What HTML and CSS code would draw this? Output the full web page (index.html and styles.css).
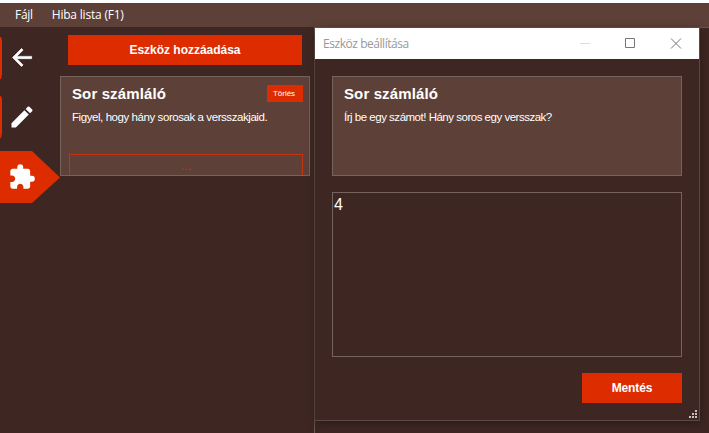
FILE: index.html
```
<!DOCTYPE html>
<html lang="hu">
<head>
<meta charset="utf-8">
<title>Eszköz beállítása</title>
<link rel="stylesheet" href="styles.css">
</head>
<body>
<nav class="menu"><span class="file">Fájl</span><span class="errors">Hiba lista (F1)</span></nav>
<main class="app">
  <aside class="sidebar">
    <div class="tab first">
      <svg class="edge" viewBox="0 0 3 42"><path d="M0 0H1L2 3V37L1 42H0Z"/></svg>
      <svg class="icon arrow" viewBox="0 0 24 24"><path d="M21 11v2H7.800l5.600 5.600L12 20l-8-8 8-8 1.400 1.400L7.800 11Z" stroke="#fff" stroke-width=".6"/></svg>
    </div>
    <div class="tab second">
      <svg class="edge" viewBox="0 0 3 42"><path d="M0 0H1L2 3V37L1 42H0Z"/></svg>
      <svg class="icon pencil" viewBox="0 0 24 24"><path d="M3 17.25V21h3.75L17.81 9.94l-3.75-3.75L3 17.25zM20.71 7.04a1 1 0 0 0 0-1.41l-2.34-2.34a1 1 0 0 0-1.41 0l-1.83 1.83 3.75 3.75 1.83-1.83z"/></svg>
    </div>
    <div class="tab active">
      <svg class="icon puzzle" viewBox="0 0 24 24"><path d="M20.5 11H19V7c0-1.1-.9-2-2-2h-4V3.5a2.5 2.5 0 0 0-5 0V5H4c-1.1 0-1.99.9-1.99 2v3.8H3.5c1.49 0 2.7 1.21 2.7 2.7s-1.21 2.7-2.7 2.7H2V20c0 1.1.9 2 2 2h3.8v-1.5c0-1.49 1.21-2.7 2.7-2.7 1.49 0 2.7 1.21 2.7 2.7V22H17c1.1 0 2-.9 2-2v-4h1.5a2.5 2.5 0 0 0 0-5z"/></svg>
    </div>
  </aside>
  <section class="tools">
    <button class="button add"><span>Eszköz hozzáadása</span></button>
    <article class="card tool">
      <header><h2>Sor számláló</h2><button class="button delete"><span>Törlés</span></button></header>
      <p class="watch">Figyel, hogy hány sorosak a versszakjaid.</p>
      <button class="more">...</button>
    </article>
  </section>
  <section class="workspace">
    <div class="dialog">
      <header class="titlebar">
        <span class="title">Eszköz beállítása</span>
        <svg class="controls" viewBox="0 0 120 30" fill="none"><path d="M10 15.500h10" stroke="#ddd"/><path d="M55.500 10.500h9v9h-9z" stroke="#777"/><path d="M101 10.500l10 10M111 10.500l-10 10" stroke="#777"/></svg>
      </header>
      <div class="content">
        <article class="card prompt"><h2>Sor számláló</h2><p class="question">Írj be egy számot! Hány soros egy versszak?</p></article>
        <div class="value">4</div>
        <button class="button save"><span>Mentés</span></button>
      </div>
      <svg class="grip" viewBox="0 0 8 8"><path d="M6 0h2v2H6zM3 3h2v2H3zM6 3h2v2H6zM0 6h2v2H0zM3 6h2v2H3zM6 6h2v2H6z"/></svg>
    </div>
  </section>
</main>
</body>
</html>
```
FILE: styles.css
```
* { box-sizing: border-box; }
body {
  margin: 0;
  height: 433px;
  overflow: hidden;
  padding-top: 3px;
  background: #fff;
  color: #fff;
  font-family: "Liberation Sans", Arial, sans-serif;
}
h2, p { margin: 0; white-space: nowrap; }
button { font-family: inherit; margin: 0; padding: 0; display: block; }
span { white-space: nowrap; }
.menu {
  height: 24px;
  display: flex;
  gap: 19px;
  padding-left: 15px;
  background: #5d4037;
  font: 12px/24px "Open Sans", sans-serif;
}
.file { letter-spacing: -0.3px; }
.errors { letter-spacing: -0.2px; }
.app { height: 406px; display: flex; background: #3e2723; }
.sidebar { width: 60px; padding-top: 10px; }
.tab { height: 42px; display: flex; align-items: center; }
.second { margin-top: 17px; }
.active {
  height: 52px;
  margin-top: 13px;
  background: #dd2c00;
  clip-path: polygon(0 0, 32px 0, 60px 26.500px, 32px 52px, 0 52px);
}
.edge { width: 3px; height: 42px; fill: #dd2c00; }
.icon { width: 27px; height: 27px; margin-left: 5px; fill: #fff; }
.arrow { margin-bottom: 2px; }
.pencil { width: 28px; height: 28px; }
.puzzle { margin-left: 8px; width: 28px; height: 28px; }
.tools { width: 254px; padding-top: 8px; }
.button { background: #dd2c00; border: 0; color: #fff; font-weight: bold; }
.add { width: 234px; height: 30px; margin-left: 8px; font-size: 12px; }
.add span { letter-spacing: -0.02px; }
.card { border: 1px solid #77635d; background: #5d4037; height: 100px; overflow: hidden; }
.card h2 { font-size: 15px; line-height: 18px; letter-spacing: 0.12px; }
.tool { width: 250px; margin-top: 11px; padding: 8px 6px 0 8px; }
.tool header { display: flex; justify-content: space-between; height: 18px; padding-left: 3px; }
.delete { width: 36px; height: 17px; padding-right: 2px; font-size: 8px; font-weight: normal; }
.card p { font-size: 11.5px; line-height: 16px; }
.watch { margin: 6px 0 0 3px; letter-spacing: -0.43px; }
.more {
  width: 234px;
  height: 30px;
  margin-top: 29px;
  border: 1px solid #c4340f;
  background: transparent;
  color: #dd2c00;
  font-size: 13px;
  line-height: 20px;
  padding-bottom: 6px;
}
.workspace { flex: 1; border-left: 1px solid #6a5853; border-top: 1px solid #6a5853; }
.dialog {
  position: relative;
  width: 385px;
  height: 393px;
  border-right: 1px solid #5c4945;
  border-bottom: 1px solid #5c4945;
  box-shadow: 1px 3px 8px #2d1b18;
}
.titlebar {
  width: 384px;
  height: 31px;
  background: #fff;
  display: flex;
  justify-content: space-between;
  padding-left: 8px;
}
.title { color: #999; font: 12px/32px "Open Sans", sans-serif; letter-spacing: -0.45px; }
.controls { width: 120px; height: 30px; margin-right: 9px; }
.content { padding: 17px 17px 0; }
.prompt { width: 350px; padding: 8px 11px; }
.question { margin-top: 6px; letter-spacing: -0.49px; }
.value {
  width: 350px;
  height: 165px;
  margin-top: 16px;
  padding: 2px 1px;
  border: 1px solid #77635d;
  font-size: 16px;
  line-height: 20px;
}
.save { width: 100px; height: 30px; margin: 16px 0 0 250px; font-size: 12px; letter-spacing: -0.1px; }
.grip { position: absolute; right: 2px; bottom: 2px; width: 8px; height: 8px; fill: #c9bfbc; }
```
